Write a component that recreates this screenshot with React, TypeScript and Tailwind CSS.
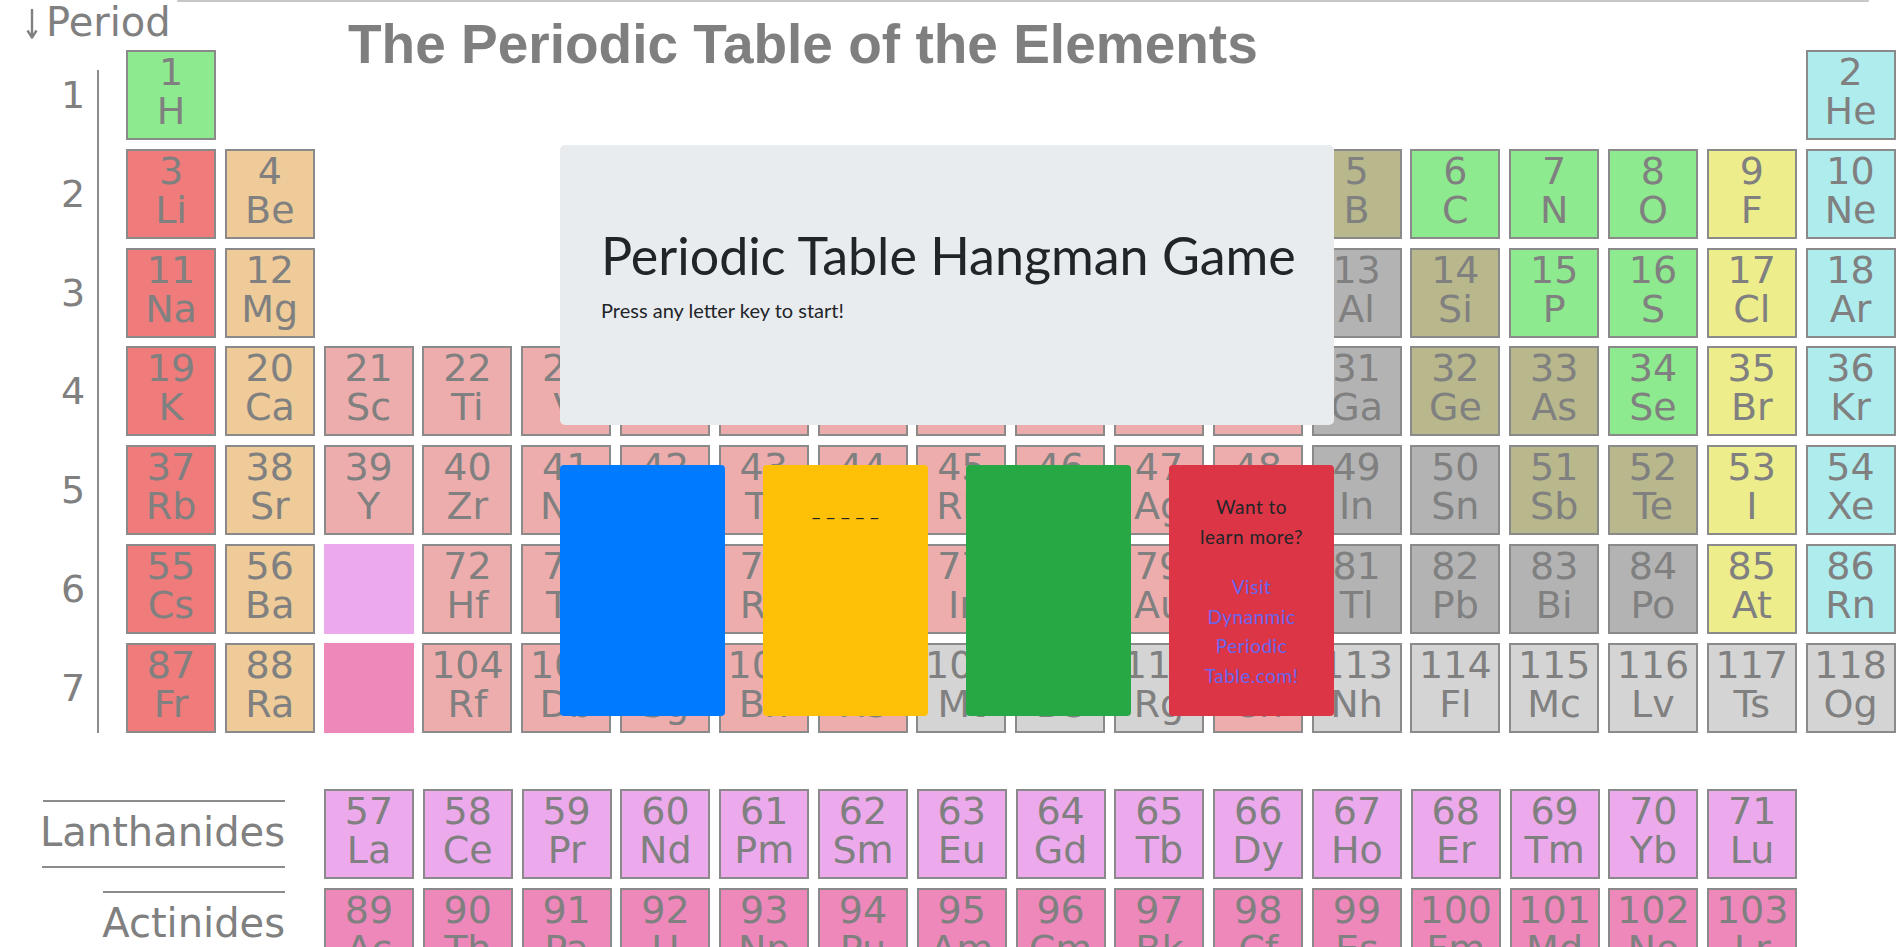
type Cat = "am" | "ae" | "tm" | "pt" | "md" | "nm" | "hg" | "ng" | "un" | "la" | "ac";
type El = [number, string, Cat] | null | "la" | "ac";

// background colours of the poster, one per element family
const bg: Record<Cat, string> = {
  am: "bg-[#ef7b7b]",
  ae: "bg-[#eecb98]",
  tm: "bg-[#eeadad]",
  pt: "bg-[#b3b3b3]",
  md: "bg-[#b8b88c]",
  nm: "bg-[#8eea8e]",
  hg: "bg-[#eeed8c]",
  ng: "bg-[#aeeced]",
  un: "bg-[#d4d4d4]",
  la: "bg-[#ecaaec]",
  ac: "bg-[#ee88bb]",
};

const gap = (n: number): El[] => Array.from({ length: n }, () => null);

const main: El[][] = [
  [[1, "H", "nm"], ...gap(16), [2, "He", "ng"]],
  [
    [3, "Li", "am"], [4, "Be", "ae"], ...gap(10),
    [5, "B", "md"], [6, "C", "nm"], [7, "N", "nm"], [8, "O", "nm"], [9, "F", "hg"], [10, "Ne", "ng"],
  ],
  [
    [11, "Na", "am"], [12, "Mg", "ae"], ...gap(10),
    [13, "Al", "pt"], [14, "Si", "md"], [15, "P", "nm"], [16, "S", "nm"], [17, "Cl", "hg"], [18, "Ar", "ng"],
  ],
  [
    [19, "K", "am"], [20, "Ca", "ae"], [21, "Sc", "tm"], [22, "Ti", "tm"], [23, "V", "tm"], [24, "Cr", "tm"],
    [25, "Mn", "tm"], [26, "Fe", "tm"], [27, "Co", "tm"], [28, "Ni", "tm"], [29, "Cu", "tm"], [30, "Zn", "tm"],
    [31, "Ga", "pt"], [32, "Ge", "md"], [33, "As", "md"], [34, "Se", "nm"], [35, "Br", "hg"], [36, "Kr", "ng"],
  ],
  [
    [37, "Rb", "am"], [38, "Sr", "ae"], [39, "Y", "tm"], [40, "Zr", "tm"], [41, "Nb", "tm"], [42, "Mo", "tm"],
    [43, "Tc", "tm"], [44, "Ru", "tm"], [45, "Rh", "tm"], [46, "Pd", "tm"], [47, "Ag", "tm"], [48, "Cd", "tm"],
    [49, "In", "pt"], [50, "Sn", "pt"], [51, "Sb", "md"], [52, "Te", "md"], [53, "I", "hg"], [54, "Xe", "ng"],
  ],
  [
    [55, "Cs", "am"], [56, "Ba", "ae"], "la", [72, "Hf", "tm"], [73, "Ta", "tm"], [74, "W", "tm"],
    [75, "Re", "tm"], [76, "Os", "tm"], [77, "Ir", "tm"], [78, "Pt", "tm"], [79, "Au", "tm"], [80, "Hg", "tm"],
    [81, "Tl", "pt"], [82, "Pb", "pt"], [83, "Bi", "pt"], [84, "Po", "pt"], [85, "At", "hg"], [86, "Rn", "ng"],
  ],
  [
    [87, "Fr", "am"], [88, "Ra", "ae"], "ac", [104, "Rf", "tm"], [105, "Db", "tm"], [106, "Sg", "tm"],
    [107, "Bh", "tm"], [108, "Hs", "tm"], [109, "Mt", "un"], [110, "Ds", "un"], [111, "Rg", "un"], [112, "Cn", "tm"],
    [113, "Nh", "un"], [114, "Fl", "un"], [115, "Mc", "un"], [116, "Lv", "un"], [117, "Ts", "un"], [118, "Og", "un"],
  ],
];

const lanth = ["La", "Ce", "Pr", "Nd", "Pm", "Sm", "Eu", "Gd", "Tb", "Dy", "Ho", "Er", "Tm", "Yb", "Lu"];
const act = ["Ac", "Th", "Pa", "U", "Np", "Pu", "Am", "Cm", "Bk", "Cf", "Es", "Fm", "Md", "No", "Lr"];

function Cell({ el }: { el: El }) {
  if (!el) return <div />;
  if (el === "la" || el === "ac") return <div className={bg[el]} />;
  return (
    <div
      className={`flex flex-col items-center border-2 border-[#8a8a8a] pt-px text-[38px] leading-[39px] ${bg[el[2]]}`}
    >
      <span>{el[0]}</span>
      <span>{el[1]}</span>
    </div>
  );
}

function Poster() {
  return (
    <div className="font-['DejaVu_Sans',sans-serif] text-[#808080]">
      <div className="ml-[177px] h-[2px] w-[1692px] rounded-full bg-[#c6c6c6]" />

      <div className="flex h-[48px] items-start">
        <div className="flex w-[348px] items-start pl-[26px]">
          <svg width="12" height="30" viewBox="0 0 12 30" className="mt-[7px]" fill="none" stroke="#808080" strokeWidth="2.4">
            <path d="M6 0V28" />
            <path d="M1.5 21.5L6 28.5L10.5 21.5" strokeLinejoin="round" />
          </svg>
          <span className="ml-[8px] text-[40px] leading-none">Period</span>
        </div>
        <h1 className="mt-[15px] font-['Liberation_Sans',Arial,sans-serif] text-[55px] font-bold leading-none whitespace-nowrap text-[#7f7f7f]">
          The Periodic Table of the Elements
        </h1>
      </div>

      <div className="flex">
        <div className="flex w-[97px] flex-col gap-[8.8px] pl-[49px]">
          {[1, 2, 3, 4, 5, 6, 7].map((p) => (
            <div key={p} className="flex h-[90px] items-center justify-center text-[38px] leading-none">
              {p}
            </div>
          ))}
        </div>
        <div className="mt-[20px] h-[663px] w-[2px] bg-[#8c8c8c]" />
        <div className="ml-[27px] grid grid-cols-[repeat(18,90px)] auto-rows-[90px] gap-[8.8px]">
          {main.flat().map((el, i) => (
            <Cell key={i} el={el} />
          ))}
        </div>
      </div>

      <div className="mt-[56px] flex">
        <div className="w-[324px]">
          <div className="w-[285px] pt-[11px]">
            <div className="ml-[43px] h-[2px] bg-[#8c8c8c]" />
            <div className="pb-[4px] text-right text-[40px] leading-[60px]">Lanthanides</div>
            <div className="ml-[42px] h-[2px] bg-[#8c8c8c]" />
            <div className="ml-[103px] mt-[23px] h-[2px] bg-[#8c8c8c]" />
            <div className="text-right text-[40px] leading-[60px]">Actinides</div>
          </div>
        </div>
        <div className="grid grid-cols-[repeat(15,90px)] auto-rows-[90px] gap-[8.8px]">
          {lanth.map((s, i) => (
            <Cell key={s} el={[57 + i, s, "la"]} />
          ))}
          {act.map((s, i) => (
            <Cell key={s} el={[89 + i, s, "ac"]} />
          ))}
        </div>
      </div>
    </div>
  );
}

export default function App() {
  return (
    <div className="relative h-[947px] w-[1897px] overflow-hidden bg-white">
      <Poster />

      {/* hangman game sits on top of the poster */}
      <div className="absolute left-[560px] top-[145px] w-[774px] font-['Lato',sans-serif] text-[#212529]">
        <div className="h-[280px] rounded-[5px] bg-[#e9ecef] pl-[41px] pt-[79px]">
          <h2 className="text-[52px] font-normal leading-[62px]">Periodic Table Hangman Game</h2>
          <p className="mt-[9px] text-[20px] leading-[30px]">Press any letter key to start!</p>
        </div>

        <div className="mt-[40px] grid h-[251px] grid-cols-4 gap-[38px] text-center text-[19px] leading-[29.5px] tracking-[0.5px]">
          <div className="rounded-[4px] bg-[#007bff]" />
          <div className="rounded-[4px] bg-[#ffc107] pt-[29px]">_ _ _ _ _</div>
          <div className="rounded-[4px] bg-[#28a745]" />
          <div className="rounded-[4px] bg-[#dc3545] pt-[27px]">
            <p>
              Want to
              <br />
              learn more?
            </p>
            <a href="#" className="mt-[21px] block text-[#6966ee]">
              Visit
              <br />
              Dynanmic
              <br />
              Periodic
              <br />
              Table.com!
            </a>
          </div>
        </div>
      </div>
    </div>
  );
}
